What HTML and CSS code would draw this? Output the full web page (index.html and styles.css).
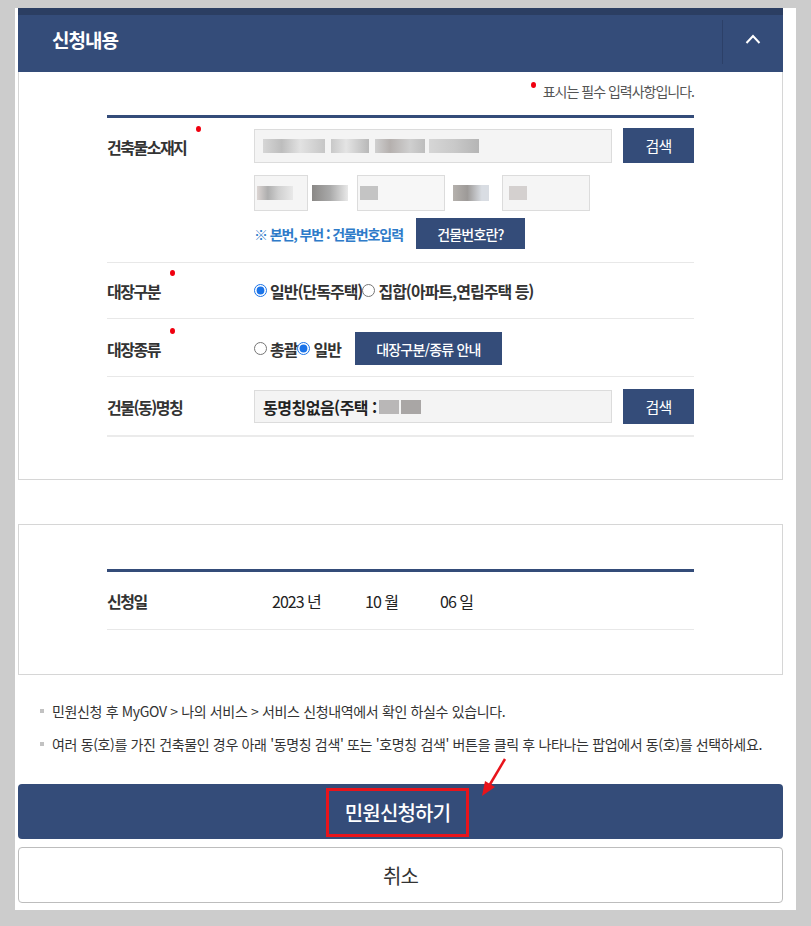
FILE: index.html
```html
<!DOCTYPE html>
<html lang="ko">
<head>
<meta charset="utf-8">
<title>신청내용</title>
<link rel="stylesheet" href="styles.css">
</head>
<body>
<div class="page">
  <div class="panel-head">
    <h2 class="panel-title">신청내용</h2>
    <div class="panel-toggle">
      <svg width="16" height="10" viewBox="0 0 16 10"><polyline points="1.5,9 8,2 14.5,9" fill="none" stroke="#fff" stroke-width="2"/></svg>
    </div>
  </div>

  <div class="box box-first">
    <p class="req-note"><span class="dot dot-note"></span>표시는 필수 입력사항입니다.</p>
    <div class="form">
      <div class="row row-addr">
        <div class="label">건축물소재지<span class="dot"></span></div>
        <div class="field">
          <div class="line">
            <div class="input input-wide">
              <span class="mz m1"></span><span class="mz m2"></span><span class="mz m3"></span><span class="mz m4"></span>
            </div>
            <button class="btn btn-search">검색</button>
          </div>
          <div class="line line-sub">
            <div class="input input-s1"><span class="mz m5"></span></div>
            <span class="mz m6"></span>
            <div class="input input-s2"><span class="mz m7"></span></div>
            <span class="mz m8"></span>
            <div class="input input-s3"><span class="mz m9"></span></div>
          </div>
          <div class="line line-hint">
            <span class="hint">※ 본번, 부번 : 건물번호입력</span>
            <button class="btn btn-info">건물번호란?</button>
          </div>
        </div>
      </div>
      <div class="row row-mid">
        <div class="label">대장구분<span class="dot"></span></div>
        <div class="field radios">
          <label class="radio"><input type="radio" name="g1" checked>일반(단독주택)</label>
          <label class="radio"><input type="radio" name="g1">집합(아파트,연립주택 등)</label>
        </div>
      </div>
      <div class="row row-kind">
        <div class="label">대장종류<span class="dot"></span></div>
        <div class="field radios">
          <label class="radio"><input type="radio" name="g2">총괄</label>
          <label class="radio"><input type="radio" name="g2" checked>일반</label>
          <button class="btn btn-guide">대장구분/종류 안내</button>
        </div>
      </div>
      <div class="row row-name">
        <div class="label">건물(동)명칭</div>
        <div class="field">
          <div class="line">
            <div class="input input-wide input-text">동명칭없음(주택 : <span class="mz m10"></span><span class="mz m11"></span></div>
            <button class="btn btn-search">검색</button>
          </div>
        </div>
      </div>
    </div>
  </div>

  <div class="box box-date">
    <div class="form">
      <div class="row row-date">
        <div class="label">신청일</div>
        <div class="field date">
          <span class="dpart">2023 년</span>
          <span class="dpart">10 월</span>
          <span class="dpart">06 일</span>
        </div>
      </div>
    </div>
  </div>

  <ul class="notes">
    <li>민원신청 후 MyGOV &gt; 나의 서비스 &gt; 서비스 신청내역에서 확인 하실수 있습니다.</li>
    <li>여러 동(호)를 가진 건축물인 경우 아래 '동명칭 검색' 또는 '호명칭 검색' 버튼을 클릭 후 나타나는 팝업에서 동(호)를 선택하세요.</li>
  </ul>

  <div class="actions">
    <svg class="arrow" width="40" height="44" viewBox="0 0 40 44">
      <line x1="28" y1="3" x2="12" y2="30" stroke="#e8141b" stroke-width="2.5"/>
      <polygon points="5,40 8,25 18,31" fill="#e8141b"/>
    </svg>
    <button class="btn-submit"><span class="submit-text">민원신청하기</span></button>
    <button class="btn-cancel">취소</button>
  </div>
</div>
</body>
</html>
```

FILE: styles.css
```css
* { box-sizing: border-box; }
html, body { margin: 0; padding: 0; }
body {
  background: #cccccc;
  font-family: "Noto Sans CJK KR", "Noto Sans", sans-serif;
  color: #333;
  height: 926px;
  overflow: hidden;
}
.page {
  width: 781px;
  margin: 15px 0 0 15px;
  background: #fff;
  padding: 0 13px 7px 3px;
}
.panel-head {
  margin-top: -7px;
  height: 64px;
  border-top: 7px solid #2b3e62;
  background: #344c79;
  display: flex;
  align-items: center;
  justify-content: space-between;
  padding-bottom: 8px;
}
.panel-title {
  margin: 0 0 0 34px;
  color: #fff;
  font-size: 19px;
  font-weight: 700;
  letter-spacing: -1px;
}
.panel-toggle {
  width: 61px;
  height: 44px;
  border-left: 1px solid #2c4068;
  display: flex;
  align-items: center;
  justify-content: center;
  margin-top: 4px;
}
.panel-toggle svg { margin-top: -6px; }
.box {
  border: 1px solid #d6d6d6;
}
.box-first {
  border-top: none;
  padding: 8px 88px 42px;
}
.req-note {
  margin: 0;
  text-align: right;
  font-size: 14px;
  line-height: 22px;
  color: #555;
  letter-spacing: -1px;
}
.dot {
  display: inline-block;
  width: 5px;
  height: 6px;
  border-radius: 50%;
  background: #f0000f;
  vertical-align: top;
  margin-left: 10px;
  margin-top: -10px;
}
.dot-note {
  margin: 2px 7px 0 0;
}
.form {
  border-top: 3px solid #344c79;
}
.box-first .form {
  margin-top: 13px;
  border-bottom: 2px solid #ebebeb;
}
.row {
  display: grid;
  grid-template-columns: 147px 1fr;
  align-items: center;
  border-bottom: 1px solid #e8e8e8;
}
.row:last-child { border-bottom: none; }
.label {
  font-size: 16px;
  font-weight: 700;
  letter-spacing: -1.5px;
  color: #333;
  line-height: 22px;
}
.row-addr { align-items: start; padding: 10px 0 13px; }
.row-addr .label { margin-top: 8px; }
.row-mid { height: 56px; padding-top: 0; }
.row-kind { height: 58px; padding-top: 2px; }
.row-name { height: 58px; padding-top: 1px; }
.line {
  display: flex;
  align-items: center;
  gap: 11px;
}
.input {
  height: 34px;
  background: #f4f4f4;
  border: 1px solid #dcdcdc;
  display: flex;
  align-items: center;
}
.input-wide { width: 358px; padding-left: 8px; gap: 0; }
.btn {
  border: none;
  background: #344c79;
  color: #fff;
  font-family: inherit;
  cursor: pointer;
  letter-spacing: -0.8px;
  padding: 0;
}
.btn-search {
  width: 71px;
  height: 35px;
  font-size: 15px;
}
.line-sub {
  gap: 0;
  margin-top: 12px;
  height: 36px;
}
.input-s1 { width: 54px; height: 36px; background: #f5f5f5; }
.input-s2 { width: 88px; height: 36px; margin-left: 9px; background: #f7f7f7; }
.input-s3 { width: 88px; height: 36px; margin-left: 13px; background: #f5f5f5; }
.mz { display: inline-block; height: 14px; }
.m1 { width: 62px; background: linear-gradient(90deg, #d6d6d6, #bdbdbd 30%, #e2e2e2 60%, #c6c6c6); }
.m2 { width: 38px; margin-left: 6px; background: linear-gradient(90deg, #c8c8c8, #e4e4e4 40%, #b8b8b8); }
.m3 { width: 50px; margin-left: 6px; background: linear-gradient(90deg, #d0d0d0, #b5b0ae 30%, #cfcfcf 70%, #bdbdbd); }
.m4 { width: 50px; margin-left: 4px; background: linear-gradient(90deg, #d6d6d6, #c9c9c9 50%, #b5b5b5); }
.m5 { width: 36px; margin-left: 2px; background: linear-gradient(90deg, #dcd5d3, #aeaeae 30%, #d0d0d0 60%, #e9e9e9); }
.m6 { width: 36px; height: 16px; margin-left: 4px; background: linear-gradient(90deg, #8a8886, #a9a9a9 50%, #e9e9e9); }
.m7 { width: 18px; margin-left: 2px; background: #c4c4c4; }
.m8 { width: 36px; height: 16px; margin-left: 8px; background: linear-gradient(90deg, #b5b1ad, #9d9a98 40%, #d9dde3 80%); }
.m9 { width: 18px; margin-left: 6px; background: #d4d0cf; }
.m10 { width: 20px; background: #b9b7b7; margin-left: 2px; }
.m11 { width: 20px; background: #a9a6a5; margin-left: 2px; }
.line-hint { margin-top: 7px; gap: 13px; }
.hint {
  font-size: 14px;
  font-weight: 700;
  color: #2e7bc9;
  letter-spacing: -1.1px;
}
.btn-info {
  width: 109px;
  height: 31px;
  font-size: 14px;
  font-weight: 500;
}
.radios {
  display: flex;
  align-items: center;
}
.radio {
  display: inline-flex;
  align-items: center;
  font-size: 16px;
  font-weight: 700;
  letter-spacing: -1px;
  color: #333;
}
.radio input {
  width: 13px;
  height: 13px;
  margin: 0 3px 0 0;
  accent-color: #1a73e8;
}
.btn-guide {
  margin-left: 14px;
  width: 147px;
  height: 33px;
  font-size: 14px;
  font-weight: 500;
}
.input-text {
  font-size: 16px;
  font-weight: 700;
  color: #222;
  letter-spacing: -0.5px;
  height: 33px;
}
.box-date {
  margin-top: 44px;
  padding: 44px 88px 44px;
}
.row-date { height: 58px; border-bottom: 1px solid #e8e8e8; }
.row-date:last-child { border-bottom: 1px solid #e8e8e8; }
.date { font-size: 16px; letter-spacing: -1px; color: #222; padding-left: 18px; display: flex; }
.dpart { display: block; }
.dpart:nth-child(1) { width: 93px; }
.dpart:nth-child(2) { width: 75px; }
.notes {
  list-style: none;
  margin: 26px 0 0;
  padding: 0 0 0 22px;
}
.notes li {
  position: relative;
  padding-left: 12px;
  font-size: 14px;
  line-height: 20px;
  letter-spacing: -0.35px;
  color: #333;
  margin-bottom: 13px;
}
.notes li::before {
  content: "";
  position: absolute;
  left: 0;
  top: 8px;
  width: 4px;
  height: 4px;
  background: #c2c2c2;
}
.actions {
  position: relative;
  margin-top: 30px;
}
.arrow {
  position: absolute;
  left: 459px;
  top: -28px;
}
.btn-submit {
  display: flex;
  align-items: center;
  justify-content: center;
  width: 100%;
  height: 55px;
  background: #344c79;
  border: none;
  border-radius: 4px;
  font-family: inherit;
  padding: 0;
}
.submit-text {
  display: inline-block;
  border: 3px solid #e8141b;
  color: #fff;
  font-size: 20px;
  font-weight: 500;
  letter-spacing: -0.8px;
  padding: 8px 16px;
  line-height: 27px;
  margin-left: -6px;
  height: 49px;
  margin-top: 1px;
}
.btn-cancel {
  display: block;
  margin-top: 8px;
  width: 100%;
  height: 56px;
  background: #fff;
  border: 1px solid #bdbdbd;
  border-radius: 4px;
  font-family: inherit;
  font-size: 20px;
  color: #333;
  letter-spacing: -0.8px;
}
```
